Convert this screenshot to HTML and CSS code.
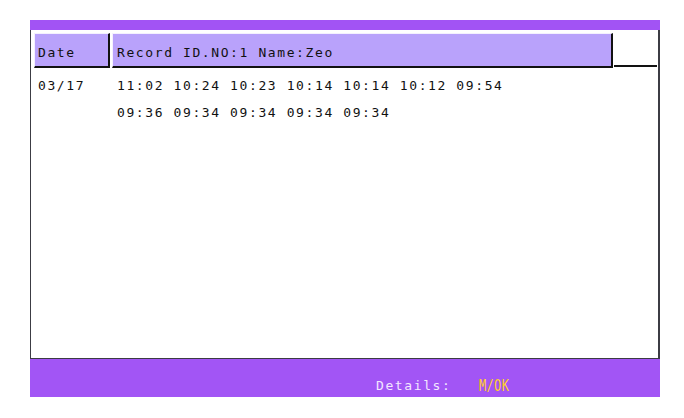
FILE: index.html
```html
<!DOCTYPE html>
<html lang="en">
<head>
    <meta charset="UTF-8">
    <title>Attendance Records</title>
    <link rel="stylesheet" href="styles.css">
</head>
<body>
    <div class="screen">
        <!-- Top title strip -->
        <div class="topbar"></div>

        <!-- Record table -->
        <div class="panel">
            <div class="head-row">
                <div class="cell cell-date">Date</div>
                <div class="cell cell-record">Record ID.NO:1 Name:Zeo</div>
                <div class="cell-blank"></div>
            </div>

            <div class="records">
                <div class="rec-date">03/17</div>
                <div class="rec-times">11:02 10:24 10:23 10:14 10:14 10:12 09:54</div>
                <div class="rec-date"></div>
                <div class="rec-times">09:36 09:34 09:34 09:34 09:34</div>
            </div>
        </div>

        <!-- Key hints -->
        <div class="footer">
            <span class="hint-label">Details:</span>
            <span class="hint-key">M/OK</span>
        </div>
    </div>
</body>
</html>
```

FILE: styles.css
```css
body {
    margin: 0;
    padding: 20px 0 0 30px;
    background-color: #ffffff;
    font-family: "DejaVu Sans Mono", "Liberation Mono", monospace;
    font-size: 13px;
    letter-spacing: 1.6px;
    color: #111111;
}

.screen {
    width: 630px;
}

.topbar {
    height: 10px;
    background-color: #a253f4;
}

/* White table area with dark frame */
.panel {
    height: 329px;
    background-color: #ffffff;
    border-left: 1px solid #3c3c44;
    border-right: 2px solid #3c3c44;
    border-bottom: 1px solid #3c3c44;
    box-sizing: border-box;
    padding: 3px 0 0 3px;
}

.head-row {
    display: flex;
    gap: 2px;
    height: 35px;
}

/* Raised header cells */
.cell {
    display: flex;
    align-items: center;
    background-color: #b9a2fb;
    border-top: 1px solid #f4f0ff;
    border-left: 1px solid #f4f0ff;
    border-right: 2px solid #121212;
    border-bottom: 2px solid #121212;
    box-sizing: border-box;
    padding: 4px 0 0 3px;
}

.cell-date {
    width: 76px;
}

.cell-record {
    width: 501px;
    padding-left: 4px;
}

.cell-blank {
    width: 43px;
    box-sizing: border-box;
    border-bottom: 2px solid #121212;
    margin-left: -1px;
    margin-bottom: 1px;
}

.records {
    display: grid;
    grid-template-columns: 79px 1fr;
    padding: 4px 0 0 4px;
    line-height: 27px;
}

.footer {
    display: flex;
    gap: 28px;
    height: 38px;
    background-color: #a255f5;
    box-sizing: border-box;
    padding: 16px 0 0 346px;
    line-height: 22px;
}

.hint-label {
    color: #f3e6ff;
}

.hint-key {
    color: #ffcf2a;
    font-size: 15px;
    letter-spacing: 0.4px;
    transform: scaleX(0.8);
    transform-origin: left center;
}
```
